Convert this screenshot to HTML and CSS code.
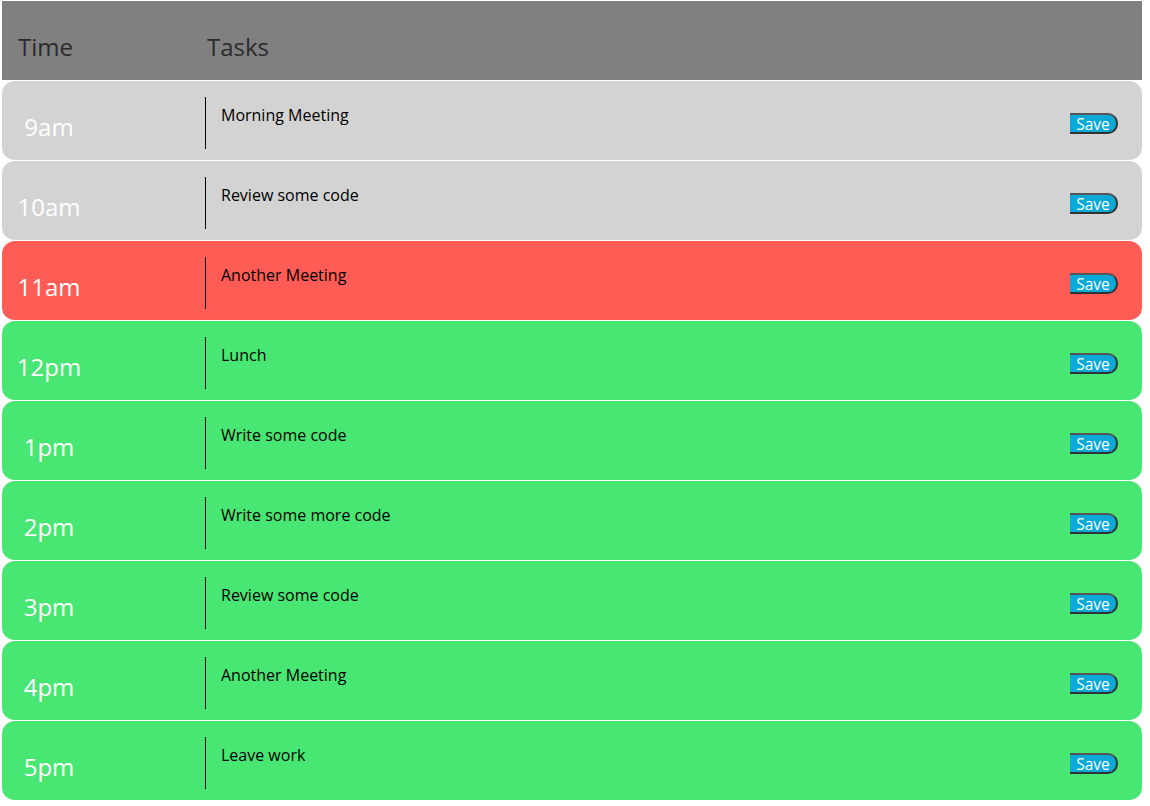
FILE: index.html
```html
<!DOCTYPE html>
<html>
<head>
<meta charset="utf-8">
<link rel="stylesheet" href="styles.css">
</head>
<body>
<div class="planner">
  <div class="header">
    <div class="h-time">Time</div>
    <div class="h-tasks">Tasks</div>
  </div>
  <div class="row past"><div class="time">9am</div><div class="task">Morning Meeting</div><button class="save">Save</button></div>
  <div class="row past"><div class="time">10am</div><div class="task">Review some code</div><button class="save">Save</button></div>
  <div class="row present"><div class="time">11am</div><div class="task">Another Meeting</div><button class="save">Save</button></div>
  <div class="row future"><div class="time">12pm</div><div class="task">Lunch</div><button class="save">Save</button></div>
  <div class="row future"><div class="time">1pm</div><div class="task">Write some code</div><button class="save">Save</button></div>
  <div class="row future"><div class="time">2pm</div><div class="task">Write some more code</div><button class="save">Save</button></div>
  <div class="row future"><div class="time">3pm</div><div class="task">Review some code</div><button class="save">Save</button></div>
  <div class="row future"><div class="time">4pm</div><div class="task">Another Meeting</div><button class="save">Save</button></div>
  <div class="row future"><div class="time">5pm</div><div class="task">Leave work</div><button class="save">Save</button></div>
</div>
</body>
</html>
```
FILE: styles.css
```css
html, body {
  margin: 0;
  padding: 0;
  background: #ffffff;
  font-family: "Open Sans", sans-serif;
}
.planner {
  padding: 1px 8px 0 2px;
}
.header {
  display: flex;
  height: 79px;
  background: #808080;
  border-bottom: 1px solid #ffffff;
  color: #2b2b2b;
  font-size: 24px;
  line-height: 33px;
}
.h-time {
  width: 189px;
  padding: 29px 0 0 16px;
}
.h-tasks {
  padding: 29px 0 0 0;
}
.row {
  display: flex;
  align-items: flex-start;
  height: 79px;
  border-bottom: 1px solid #ffffff;
  border-radius: 13px;
}
.past { background: #d3d3d3; }
.present { background: #ff5c55; }
.future { background: #48e672; }
.time {
  width: 94px;
  margin-right: 109px;
  text-align: center;
  color: #ffffff;
  font-size: 24px;
  line-height: 33px;
  padding-top: 29px;
}
.task {
  flex: 1;
  margin-top: 16px;
  height: 52px;
  border-left: 1px solid #000000;
  padding: 7px 0 0 15px;
  box-sizing: border-box;
  font-size: 16px;
  line-height: 22px;
  color: #000000;
}
.save {
  margin: 32px 24px 0 0;
  width: 48px;
  height: 21px;
  padding: 0 0 1px 0;
  background: #0aa9d8;
  color: #ffffff;
  font-family: "Open Sans", sans-serif;
  font-size: 15.5px;
  line-height: 18px;
  border: 2px solid #333333;
  border-left: none;
  border-top-color: #555555;
  border-radius: 0 10px 10px 0;
  box-sizing: border-box;
}
```
